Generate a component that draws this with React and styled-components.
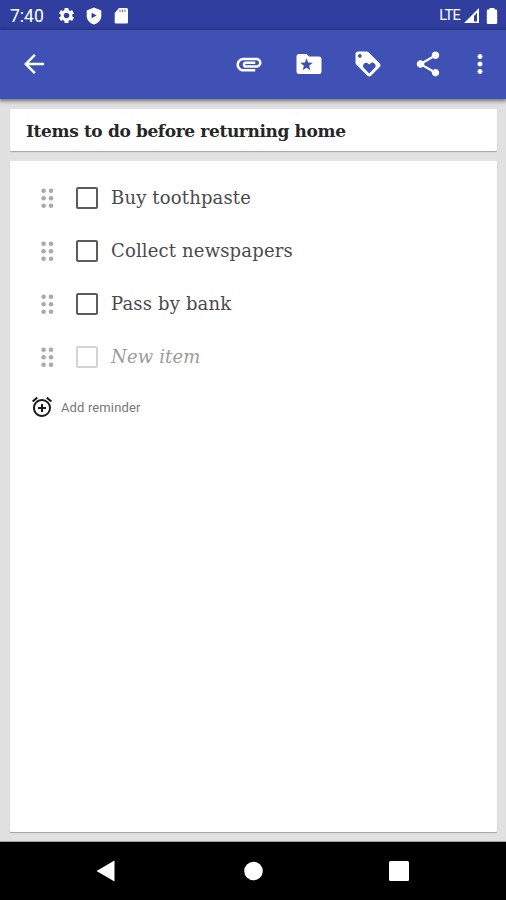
import React from 'react';
import styled, { createGlobalStyle } from 'styled-components';
import { MdArrowBack, MdAttachment, MdLoyalty, MdShare, MdMoreVert, MdSettings, MdAlarmAdd } from 'react-icons/md';

const GlobalStyle = createGlobalStyle`
  * { box-sizing: border-box; }
  body { margin: 0; background: #e1e1e1; }
`;

const Screen = styled.div`
  width: 506px;
  height: 900px;
  display: flex;
  flex-direction: column;
  overflow: hidden;
  background: #e1e1e1;
  font-family: Roboto, sans-serif;
`;

const StatusBar = styled.div`
  height: 30px;
  flex: none;
  display: flex;
  align-items: center;
  padding: 1px 5px 0 10px;
  background: #303f9f;
  color: #fff;
`;

const Clock = styled.span`
  width: 47px;
  font-size: 17.5px;
  line-height: 20px;
`;

const StatusIcons = styled.div`
  display: flex;
  align-items: center;
  gap: 9px;
  flex: 1;
  svg { display: block; }
`;

const Network = styled.div`
  display: flex;
  align-items: center;
  gap: 3px;
  font-size: 14.5px;
  letter-spacing: -0.7px;
  svg { display: block; }
`;

const Toolbar = styled.div`
  height: 69px;
  flex: none;
  display: flex;
  align-items: center;
  justify-content: space-between;
  padding: 0 11px 1px 19px;
  background: #3f51b5;
  color: #fff;
  box-shadow: 0 1px 4px 1px rgba(0, 0, 0, 0.5);
  z-index: 1;
`;

const IconButton = styled.button`
  width: 30px;
  height: 30px;
  padding: 0;
  border: 0;
  background: none;
  color: inherit;
  svg { display: block; width: 30px; height: 30px; }
`;

const Actions = styled.div`
  display: grid;
  grid-template-columns: 60px 59px 60px 52px 30px;
`;

const Content = styled.main`
  flex: 1;
  display: flex;
  flex-direction: column;
  gap: 10px;
  padding: 10px 9px 10px 10px;
`;

const Card = styled.section`
  background: #fff;
  border-radius: 1px;
  box-shadow: 0 1px 1px rgba(0, 0, 0, 0.28);
`;

const TitleCard = styled(Card)`
  height: 42px;
  flex: none;
  padding: 0 16px;
`;

const Title = styled.h1`
  margin: 0;
  font: bold 17px/44px "DejaVu Serif", serif;
  letter-spacing: -0.37px;
  color: #262626;
  white-space: nowrap;
`;

const NoteCard = styled(Card)`
  flex: 1;
  padding: 10px 20px;
`;

const Item = styled.div`
  height: 53px;
  display: grid;
  grid-template-columns: 46px 35px 1fr;
  align-items: center;
  svg { display: block; margin-left: 10px; }
`;

const Checkbox = styled.span`
  width: 22px;
  height: 22px;
  border: 2px solid ${p => (p.$faded ? '#d4d4d4' : '#5c5c5c')};
  border-radius: 2px;
`;

const Label = styled.span`
  font: ${p => (p.$faded ? 'italic' : 'normal')} 18px/24px "DejaVu Serif", serif;
  letter-spacing: 0.16px;
  color: ${p => (p.$faded ? '#9b9b9b' : '#4a4a4a')};
  white-space: nowrap;
`;

const Reminder = styled.div`
  display: flex;
  align-items: center;
  height: 24px;
  margin-top: 12px;
  gap: 7px;
  font-size: 13px;
  letter-spacing: 0.13px;
  color: #777;
  svg { color: #1b1b1b; }
`;

const NavBar = styled.nav`
  height: 58px;
  flex: none;
  display: flex;
  align-items: center;
  justify-content: space-between;
  padding: 0 97px 0 96px;
  background: #000;
  box-shadow: 0 -1px 0 rgba(0, 0, 0, 0.3);
`;

const ShieldIcon = () => (
  <svg width="18" height="18" viewBox="0 0 18 18">
    <path fill="#fff" fillRule="evenodd" d="M9 .5l7.3 3v5.4c0 4-3 7.2-7.3 8.6-4.3-1.4-7.3-4.6-7.3-8.6V3.5zM6.6 5.7v5.6L11.6 8.5z" />
  </svg>
);

const SdIcon = () => (
  <svg width="18" height="18" viewBox="0 0 18 18">
    <path fill="#fff" d="M7 1h7.5Q16 1 16 2.5v12.8q0 1.2-1.2 1.2H4q-1.3 0-1.3-1.2V6z" />
    <path stroke="#303f9f" strokeWidth="0.8" d="M8 2.5v2.5M10.5 2.5v2.5M13 2.5v2.5" />
  </svg>
);

const SignalIcon = () => (
  <svg width="17" height="17" viewBox="0 0 17 17">
    <path fill="#fff" fillRule="evenodd" d="M16 1v15H1zM14 5.8L11 9v5.5h3z" />
  </svg>
);

const BatteryIcon = () => (
  <svg width="18" height="18" viewBox="0 0 18 18">
    <path fill="#fff" d="M6.5 1h5v1.5H13q1.2 0 1.2 1.2v12q0 1.3-1.2 1.3H5q-1.2 0-1.2-1.3v-12q0-1.2 1.2-1.2h1.5z" />
  </svg>
);

const FolderStarIcon = () => (
  <svg viewBox="0 0 24 24">
    <path
      fill="currentColor"
      fillRule="evenodd"
      d="M10 4H4a2 2 0 0 0-2 2v12a2 2 0 0 0 2 2h16a2 2 0 0 0 2-2V8a2 2 0 0 0-2-2h-8zM10 7.4l1.3 3.4 3.7.2-2.9 2.3 1 3.6L10 14.9 6.9 16.9l1-3.6L5 11l3.7-.2z"
    />
  </svg>
);

const DragHandle = () => (
  <svg width="16" height="22" viewBox="0 0 16 22" fill="#aaa">
    {[3.7, 11.2, 18.7].map(y => (
      <React.Fragment key={y}>
        <circle cx="3.6" cy={y} r="2.3" />
        <circle cx="11" cy={y} r="2.3" />
      </React.Fragment>
    ))}
  </svg>
);

const items = [
  { text: 'Buy toothpaste' },
  { text: 'Collect newspapers' },
  { text: 'Pass by bank' },
  { text: 'New item', faded: true },
];

export default function App() {
  return (
    <Screen>
      <GlobalStyle />
      <StatusBar>
        <Clock>7:40</Clock>
        <StatusIcons>
          <MdSettings size={19} />
          <ShieldIcon />
          <SdIcon />
        </StatusIcons>
        <Network>
          <span>LTE</span>
          <SignalIcon />
          <BatteryIcon />
        </Network>
      </StatusBar>
      <Toolbar>
        <IconButton aria-label="Back"><MdArrowBack /></IconButton>
        <Actions>
          <IconButton aria-label="Attach"><MdAttachment /></IconButton>
          <IconButton aria-label="Folder"><FolderStarIcon /></IconButton>
          <IconButton aria-label="Tag"><MdLoyalty /></IconButton>
          <IconButton aria-label="Share"><MdShare /></IconButton>
          <IconButton aria-label="More"><MdMoreVert /></IconButton>
        </Actions>
      </Toolbar>
      <Content>
        <TitleCard>
          <Title>Items to do before returning home</Title>
        </TitleCard>
        <NoteCard>
          {items.map(item => (
            <Item key={item.text}>
              <DragHandle />
              <Checkbox $faded={item.faded} />
              <Label $faded={item.faded}>{item.text}</Label>
            </Item>
          ))}
          <Reminder>
            <MdAlarmAdd size={24} />
            <span>Add reminder</span>
          </Reminder>
        </NoteCard>
      </Content>
      <NavBar>
        <svg width="20" height="22" viewBox="0 0 20 22"><path fill="#fff" d="M18.5.5v21L.5 11z" /></svg>
        <svg width="20" height="20" viewBox="0 0 20 20"><circle cx="10.5" cy="10" r="9.3" fill="#fff" /></svg>
        <svg width="20" height="20" viewBox="0 0 20 20"><rect width="20" height="20" rx="1.5" fill="#fff" /></svg>
      </NavBar>
    </Screen>
  );
}
